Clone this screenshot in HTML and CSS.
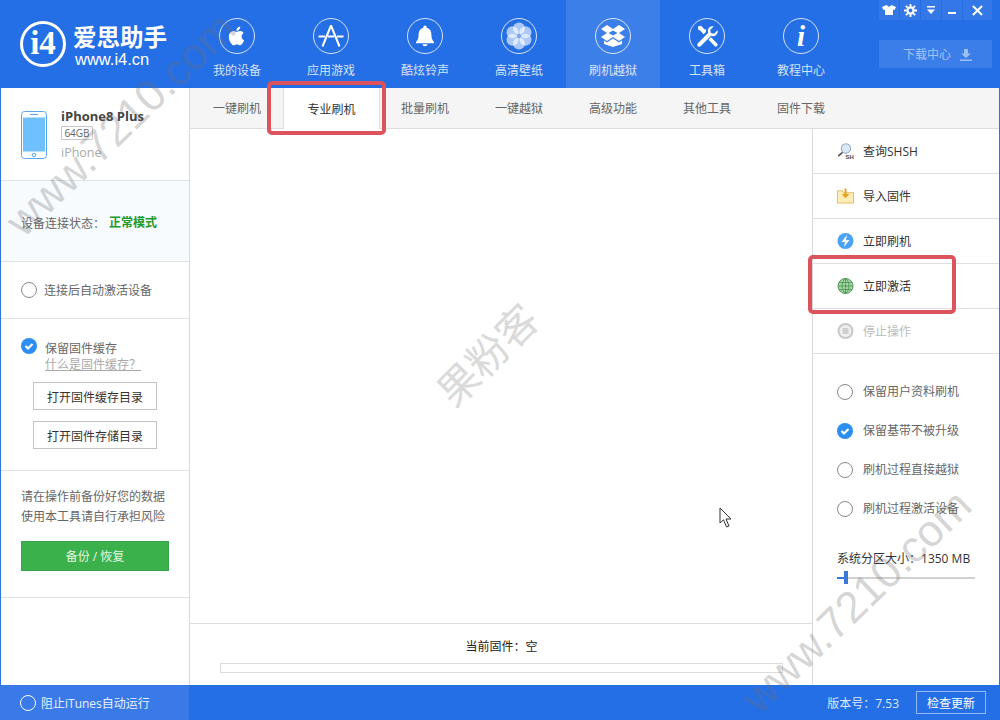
FILE: index.html
```html
<!DOCTYPE html>
<html lang="zh-CN">
<head>
<meta charset="utf-8">
<title>爱思助手</title>
<link rel="stylesheet" href="styles.css">
</head>
<body>
<div class="app">
  <header class="header">
    <div class="logo">
      <svg class="logo-mark" viewBox="0 0 46 46"><circle cx="23" cy="23" r="21.5" fill="none" stroke="#fff" stroke-width="3"/><text x="23" y="33" text-anchor="middle" class="logo-i4">i4</text></svg>
      <div class="logo-text"><div class="logo-cn">爱思助手</div><div class="logo-url">www.i4.cn</div></div>
    </div>
    <nav class="nav">
      <div class="nav-item"><span class="nav-ic"><svg viewBox="0 0 24 24" width="22" height="22"><path fill="#fff" d="M17.05 12.54c-.03-2.6 2.12-3.85 2.22-3.91-1.21-1.77-3.09-2.01-3.76-2.04-1.6-.16-3.12.94-3.93.94-.81 0-2.06-.92-3.39-.89-1.74.03-3.35 1.01-4.25 2.57-1.81 3.14-.46 7.79 1.3 10.34.86 1.25 1.89 2.65 3.24 2.6 1.3-.05 1.79-.84 3.36-.84 1.57 0 2.01.84 3.38.81 1.4-.03 2.28-1.27 3.14-2.53.99-1.45 1.4-2.85 1.42-2.93-.03-.01-2.72-1.04-2.75-4.12zM14.47 4.9c.72-.87 1.2-2.08 1.07-3.28-1.03.04-2.28.69-3.02 1.55-.66.77-1.24 2-1.09 3.18 1.15.09 2.32-.58 3.04-1.45z"/></svg></span><span>我的设备</span></div>
      <div class="nav-item"><span class="nav-ic"><svg viewBox="0 0 28 28" width="28" height="28"><path fill="none" stroke="#fff" stroke-width="2" d="M14 3.500 5.500 24.500M14 3.500l8.500 21M1.500 14.500h6.500M11 14.500h6M20 14.500h6.500"/></svg></span><span>应用游戏</span></div>
      <div class="nav-item"><span class="nav-ic"><svg viewBox="0 0 24 24" width="24" height="24"><path fill="#fff" d="M12 1.500a1.700 1.700 0 0 0-1.700 1.700v.5C7 4.600 5.600 7.400 5.600 10.600c0 3.800-.8 5.600-2.600 7.400v1.200h18V18c-1.800-1.800-2.600-3.600-2.600-7.400 0-3.200-1.400-6-4.700-6.900v-.5A1.700 1.700 0 0 0 12 1.500zM9.300 20.300a2.800 2.800 0 0 0 5.400 0z"/></svg></span><span>酷炫铃声</span></div>
      <div class="nav-item"><span class="nav-ic"><svg viewBox="0 0 30 30" width="30" height="30"><g fill="#fff" fill-opacity=".62"><circle cx="15" cy="7.500" r="6"/><circle cx="15" cy="22.500" r="6"/><circle cx="8.500" cy="11.200" r="6"/><circle cx="21.500" cy="11.200" r="6"/><circle cx="8.500" cy="18.800" r="6"/><circle cx="21.500" cy="18.800" r="6"/></g><circle cx="15" cy="15" r="1.600" fill="#7fa8ee"/></svg></span><span>高清壁纸</span></div>
      <div class="nav-item is-active"><span class="nav-ic"><svg viewBox="0 0 24 22" width="24" height="22"><path fill="#fff" fill-rule="evenodd" d="M6 0 12 4 18 0 24 4 18 8 24 12 18 16 12 12 6 16 0 12 6 8 0 4zM12 5.500 16.500 8 12 10.500 7.500 8z"/><path fill="#fff" d="M3 15.500 6 17.500 12 13.500 18 17.500 21 15.500V19L12 22 3 19z"/></svg></span><span>刷机越狱</span></div>
      <div class="nav-item"><span class="nav-ic"><svg viewBox="0 0 30 30" width="25" height="25"><path fill="#fff" d="M27 7.500 22.800 11.700 19 10.900l-.8-3.800L22.400 3c-3.400-.9-7 1.600-7 5.300 0 .9.200 1.700.5 2.300L3.200 23.300a2.500 2.500 0 0 0 3.500 3.500l12.700-12.700c4.400 1.900 9-2.200 7.600-6.600z"/><path fill="#fff" d="M3.500 3 7.200 2l4.700 5 1.300-1.300 0 3.800L10.300 12.300 6.500 8 4 7zM16.200 19l3-3 7.300 7.300a2.100 2.100 0 0 1-3 3z"/></svg></span><span>工具箱</span></div>
      <div class="nav-item"><span class="nav-ic"><span class="info-i">i</span></span><span>教程中心</span></div>
    </nav>
    <div class="head-right">
      <div class="win-ctrls">
        <span class="win-btn"><svg viewBox="0 0 14 12" width="14" height="12"><path fill="#fff" d="M4.500 1 0 3l1.500 3L3 5.500V11h8V5.500l1.500.5L14 3 9.500 1 7 3z"/></svg></span>
        <span class="win-btn"><svg viewBox="0 0 14 14" width="13" height="13"><circle cx="7" cy="7" r="3.300" fill="none" stroke="#fff" stroke-width="2.400"/><path stroke="#fff" stroke-width="2" d="M7 0v3M7 11v3M0 7h3M11 7h3M2 2l2 2M10 10l2 2M12 2l-2 2M4 10l-2 2"/></svg></span>
        <span class="win-btn"><svg viewBox="0 0 10 10" width="10" height="10"><path fill="#fff" d="M1 1h8v1.500H1zM1 4.500h8L5 9z"/></svg></span>
        <span class="win-btn"><svg viewBox="0 0 10 10" width="10" height="10"><path fill="#fff" d="M1 7h8v2H1z"/></svg></span>
        <span class="win-btn win-close"><svg viewBox="0 0 12 12" width="11" height="11"><path stroke="#fff" stroke-width="2.200" d="m1 1 10 10M11 1 1 11"/></svg></span>
      </div>
      <div class="dl-btn"><span>下载中心</span><svg viewBox="0 0 12 12" width="12" height="12"><path fill="#fff" fill-opacity=".5" d="M4 0h4v4.500h3L6 9 1 4.500h3zM0 10.500h12V12H0z"/></svg></div>
    </div>
  </header>

  <div class="body">
    <aside class="side">
      <section class="dev">
        <svg class="dev-ic" viewBox="0 0 26 48"><rect x=".5" y=".5" width="25" height="47" rx="3" fill="#fff" stroke="#5aa6ea"/><rect x="2" y="6.500" width="22" height="34" fill="#6fc0ff"/><path stroke="#5aa6ea" d="M9 3.500h8"/><circle cx="13" cy="44" r="1.800" fill="none" stroke="#5aa6ea"/></svg>
        <div class="dev-info">
          <div class="dev-name">iPhone8 Plus</div>
          <div class="dev-cap">64GB</div>
          <div class="dev-type">iPhone</div>
        </div>
      </section>
      <section class="status"><span>设备连接状态<span class="colon">：</span></span><b class="ok">正常模式</b></section>
      <section class="auto"><span class="radio"></span><span class="lbl">连接后自动激活设备</span></section>
      <section class="cache">
        <div class="cache-head">
          <span class="radio radio-on"><svg viewBox="0 0 16 16" width="16" height="16"><path fill="none" stroke="#fff" stroke-width="2.200" d="m4.500 8 2.500 2.500 4.500-4.500"/></svg></span>
          <div class="cache-txt"><div>保留固件缓存</div><a class="cache-link">什么是固件缓存<span class="colon">？</span></a></div>
        </div>
        <div class="btn-out">打开固件缓存目录</div>
        <div class="btn-out">打开固件存储目录</div>
      </section>
      <section class="warn">
        <p>请在操作前备份好您的数据</p>
        <p>使用本工具请自行承担风险</p>
        <div class="btn-green">备份 / 恢复</div>
      </section>
    </aside>

    <div class="content">
      <div class="tabs">
        <span class="tab">一键刷机</span>
        <span class="tab tab-on">专业刷机</span>
        <span class="tab">批量刷机</span>
        <span class="tab">一键越狱</span>
        <span class="tab">高级功能</span>
        <span class="tab">其他工具</span>
        <span class="tab">固件下载</span>
      </div>
      <div class="work">
        <main class="center">
          <div class="canvas"></div>
          <div class="fw">
            <div class="fw-label">当前固件<span class="colon">：</span>空</div>
            <div class="fw-bar"></div>
          </div>
        </main>
        <aside class="panel">
          <div class="act"><svg viewBox="0 0 20 20" width="20" height="20"><circle cx="10.500" cy="7" r="5.500" fill="#dbe9f7" stroke="#8fa9c2" stroke-width="1.200"/><path stroke="#555" stroke-width="2" d="m6.500 11.500-5 4.500"/><text x="10" y="19.500" class="sh">SH</text></svg><span class="lbl">查询SHSH</span></div>
          <div class="act"><svg viewBox="0 0 18 16" width="17" height="16"><path fill="#fdeeb8" stroke="#e8b95a" d="M.5 2.500h5l1.500 2h10.500v11H.5z"/><path fill="#e8a020" d="M8 0h2v6h3l-4 4.500L5 6h3z"/></svg><span class="lbl">导入固件</span></div>
          <div class="act"><svg viewBox="0 0 16 16" width="16" height="16"><circle cx="8" cy="8" r="8" fill="#4aa3f5"/><path fill="#fff" d="M9.500 2 4 9h3.500L6.500 14 12 7H8.500z"/></svg><span class="lbl">立即刷机</span></div>
          <div class="act"><svg viewBox="0 0 16 16" width="16" height="16"><circle cx="8" cy="8" r="7.500" fill="#a5d4a5" stroke="#4f9a55"/><path fill="none" stroke="#3f8c48" stroke-width=".7" d="M.5 8h15M1.500 4.500h13M1.500 11.500h13M8 .5v15M8 .5C3.500 3.500 3.500 12.500 8 15.500M8 .5c4.500 3 4.500 12 0 15"/></svg><span class="lbl">立即激活</span></div>
          <div class="act act-off"><svg viewBox="0 0 16 16" width="16" height="16"><circle cx="8" cy="8" r="7" fill="#f0f0f0" stroke="#c8c8c8" stroke-width="2"/><rect x="5" y="5" width="6" height="6" rx="1" fill="#cfcfcf"/></svg><span class="lbl">停止操作</span></div>
          <div class="opts">
            <div class="opt"><span class="radio"></span><span>保留用户资料刷机</span></div>
            <div class="opt"><span class="radio radio-on"><svg viewBox="0 0 16 16" width="16" height="16"><path fill="none" stroke="#fff" stroke-width="2.200" d="m4.500 8 2.500 2.500 4.500-4.500"/></svg></span><span>保留基带不被升级</span></div>
            <div class="opt"><span class="radio"></span><span>刷机过程直接越狱</span></div>
            <div class="opt"><span class="radio"></span><span>刷机过程激活设备</span></div>
          </div>
          <div class="sys">
            <div class="sys-label">系统分区大小<span class="colon">：</span>1350 MB</div>
            <div class="slider"><span class="slider-fill"></span><span class="slider-thumb"></span></div>
          </div>
        </aside>
      </div>
    </div>
  </div>

  <footer class="footer">
    <div class="foot-left"><span class="radio radio-w"></span><span class="lbl">阻止iTunes自动运行</span></div>
    <div class="foot-right"><span class="lbl">版本号<span class="colon">：</span>7.53</span><span class="btn-check">检查更新</span></div>
  </footer>

  <div class="mark mark-a">www.7210.com</div>
  <div class="mark mark-b">www.7210.com</div>
  <div class="mark-c">果粉客</div>
  <div class="hl hl-a"></div>
  <div class="hl hl-b"></div>
  <svg class="cursor" viewBox="0 0 14 21" width="14" height="21"><path fill="#fff" stroke="#333" d="M1 1v15l3.500-3.200L7.500 20l2.500-1-3-7h5z"/></svg>
</div>
</body>
</html>
```

FILE: styles.css
```css
* { box-sizing: border-box; }
html, body { margin: 0; padding: 0; }
body { font-family: "Open Sans", "Noto Sans CJK SC", "Liberation Sans", sans-serif; font-size: 12px; line-height: 16px; color: #666; background: #fff; }
p { margin: 0; }
.colon { font-family: "Noto Sans CJK TC", sans-serif; }
.lbl { padding-top: 2px; }

.app { position: relative; width: 1000px; height: 720px; overflow: hidden; display: flex; flex-direction: column; }

/* header */
.header { height: 88px; flex: none; background: #256fe6; display: flex; color: #fff; }
.logo { width: 190px; flex: none; display: flex; padding: 21px 0 0 20px; }
.logo-mark { width: 46px; height: 46px; flex: none; }
.logo-i4 { font: bold 33px "Liberation Serif", serif; fill: #fff; }
.logo-text { margin-left: 7px; margin-top: 3px; }
.logo-cn { font-family: "Noto Sans CJK SC", sans-serif; font-size: 23.500px; line-height: 25px; font-weight: 700; white-space: nowrap; margin-bottom: 1px; }
.logo-url { font: 16.500px/18px "Liberation Sans", sans-serif; margin-left: 2px; }
.nav { display: flex; }
.nav-item { width: 94px; padding-top: 18px; display: flex; flex-direction: column; align-items: center; color: rgba(255,255,255,.82); }
.nav-item.is-active { background: #3d7fe9; }
.nav-ic { width: 36px; height: 36px; border-radius: 50%; border: 1px solid rgba(255,255,255,.8); display: flex; align-items: center; justify-content: center; margin-bottom: 9px; }
.info-i { font: italic bold 29px/34px "Liberation Serif", serif; color: #fff; }
.head-right { margin-left: 31px; width: 113px; }
.win-ctrls { height: 20px; display: flex; gap: 1px; }
.win-btn { flex: 1; background: #3477e7; display: flex; align-items: center; justify-content: center; }
.win-close { flex: none; width: 29px; }
.dl-btn { margin-top: 20px; height: 28px; background: #3c7ee9; display: flex; align-items: center; justify-content: center; gap: 9px; color: rgba(255,255,255,.55); padding: 2px 0 0 4px; }

/* layout */
.body { flex: 1; display: flex; min-height: 0; border-left: 1px solid #2f74e2; border-right: 1px solid #2f74e2; }
.side { width: 189px; flex: none; border-right: 1px solid #d9d9d9; display: flex; flex-direction: column; }
.side section { border-bottom: 1px solid #dfe3e8; }
.dev { height: 93px; display: flex; padding: 23px 0 0 20px; }
.dev-ic { width: 26px; height: 48px; flex: none; }
.dev-info { margin-left: 14px; }
.dev-name { font: bold 13px/14px "Open Sans", "Liberation Sans", sans-serif; color: #444; margin-top: -2px; white-space: nowrap; }
.dev-cap { width: 32px; height: 14px; border: 1px solid #c8c8c8; margin-top: 3px; font: 10px/12px "Open Sans", sans-serif; text-align: center; color: #666; border-radius: 1px; }
.dev-type { font: 12.500px/16px "Open Sans", sans-serif; color: #aaa; margin-top: 5px; }
.status { height: 81px; background: #f7fbfe; display: flex; align-items: center; padding: 4px 0 0 20px; }
.ok { color: #1c9a2a; font-weight: 700; margin-left: 4px; }
.auto { height: 57px; display: flex; align-items: center; gap: 7px; padding-left: 20px; }
.radio { width: 16px; height: 16px; border-radius: 50%; border: 1px solid #8a8a8a; flex: none; background: #fff; display: block; }
.radio-on { background: #2b8ef0; border: 0; }
.radio-on svg { display: block; }
.radio-w { background: transparent; border-color: #fff; }
.cache { height: 152px; padding: 19px 0 0 20px; }
.cache-head { display: flex; gap: 8px; }
.cache-txt { line-height: 17px; padding-top: 2px; height: 33px; }
.cache-link { color: #aaa; text-decoration: underline; display: block; margin-top: -2px; }
.btn-out { width: 124px; height: 28px; border: 1px solid #c4c4c4; margin: 11px 0 0 12px; padding-top: 4px; display: flex; align-items: center; justify-content: center; color: #333; }
.warn { height: 127px; padding: 16px 0 0 20px; }
.warn p { line-height: 20px; }
.btn-green { width: 148px; height: 30px; margin-top: 14px; padding-top: 2px; background: #3ab14a; border: 1px solid #37a347; color: #e6f8e6; display: flex; align-items: center; justify-content: center; }

/* content */
.content { flex: 1; display: flex; flex-direction: column; min-width: 0; }
.tabs { height: 41px; flex: none; background: #f5f5f5; border-bottom: 1px solid #dedede; display: flex; }
.tab { width: 94px; display: flex; align-items: center; justify-content: center; color: #666; height: 40px; padding-top: 2px; }
.tab-on { background: #fff; color: #333; border-left: 1px solid #dedede; border-right: 1px solid #dedede; height: 41px; width: 97px; margin: 0 -2px 0 -1px; }
.work { flex: 1; display: flex; min-height: 0; }
.center { flex: 1; display: flex; flex-direction: column; min-width: 0; }
.canvas { flex: 1; }
.fw { height: 62px; border-top: 1px solid #dedede; padding: 13px 29px 0 30px; }
.fw-label { text-align: center; color: #222; line-height: 18px; }
.fw-bar { height: 10px; border: 1px solid #dcdcdc; margin-top: 7px; }
.panel { width: 187px; flex: none; border-left: 1px solid #d9d9d9; display: flex; flex-direction: column; }
.act { height: 45px; border-bottom: 1px solid #dfdfdf; display: flex; align-items: center; padding-left: 24px; gap: 9px; color: #333; }
.act svg { width: 17px; flex: none; }
.sh { font: bold 7px "Liberation Sans", sans-serif; fill: #444; }
.act-off { color: #bbb; }
.opts { padding-top: 18px; }
.opt { height: 39px; display: flex; align-items: center; padding-left: 24px; gap: 10px; }
.sys { padding: 21px 0 0 24px; }
.sys-label { color: #333; line-height: 18px; white-space: nowrap; }
.slider { position: relative; width: 138px; height: 2px; background: #d0d0d0; margin-top: 9px; }
.slider-fill { position: absolute; left: 0; top: 0; width: 10px; height: 2px; background: #3b78d8; }
.slider-thumb { position: absolute; left: 7px; top: -6px; width: 4px; height: 13px; background: #3b78d8; }

/* footer */
.footer { height: 35px; flex: none; background: #256fe6; color: #fff; display: flex; }
.foot-left { width: 189px; background: #3a7ae8; display: flex; align-items: center; padding-left: 20px; gap: 5px; color: #e8f0ff; }
.foot-right { margin-left: auto; display: flex; align-items: center; gap: 17px; padding-right: 14px; color: #dce8ff; }
.btn-check { width: 70px; height: 23px; padding-top: 2px; border: 1px solid rgba(255,255,255,.5); display: flex; align-items: center; justify-content: center; color: #fff; }

/* overlays */
.mark { position: absolute; font: 44px/48px "Liberation Sans", sans-serif; color: rgba(110,110,110,.3); transform: rotate(-44deg); transform-origin: 0 50%; white-space: nowrap; pointer-events: none; }
.mark-a { left: 13px; top: 204px; }
.mark-b { left: 749px; top: 681px; }
.mark-c { position: absolute; left: 424px; top: 332px; font-family: "Noto Sans CJK SC", sans-serif; font-size: 41px; line-height: 42px; color: #dadada; transform: rotate(-45deg); white-space: nowrap; }
.hl { position: absolute; border: 4px solid #dc535c; border-radius: 5px; }
.hl-a { left: 267px; top: 81px; width: 119px; height: 54px; }
.hl-b { left: 808px; top: 255px; width: 148px; height: 59px; }
.cursor { position: absolute; left: 719px; top: 507px; }
```
